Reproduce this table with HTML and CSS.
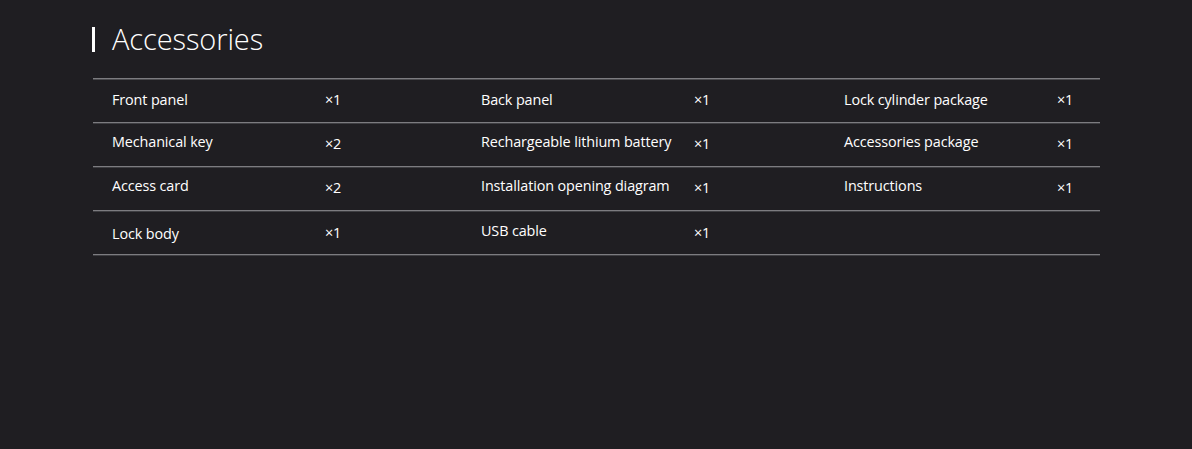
FILE: index.html
```html
<!DOCTYPE html>
<html lang="en">
<head>
<meta charset="utf-8">
<title>Accessories</title>
<link rel="stylesheet" href="styles.css">
</head>
<body>
<section class="acc">
  <h2 class="acc-title"><span class="acc-bar"></span>Accessories</h2>
  <div class="acc-table">
    <div class="acc-row first">
      <span class="name">Front panel</span><span class="qty">×1</span>
      <span class="name">Back panel</span><span class="qty">×1</span>
      <span class="name">Lock cylinder package</span><span class="qty">×1</span>
    </div>
    <div class="acc-row">
      <span class="name">Mechanical key</span><span class="qty low">×2</span>
      <span class="name">Rechargeable lithium battery</span><span class="qty low">×1</span>
      <span class="name">Accessories package</span><span class="qty low">×1</span>
    </div>
    <div class="acc-row">
      <span class="name">Access card</span><span class="qty low">×2</span>
      <span class="name">Installation opening diagram</span><span class="qty low">×1</span>
      <span class="name">Instructions</span><span class="qty low">×1</span>
    </div>
    <div class="acc-row last">
      <span class="name low">Lock body</span><span class="qty low">×1</span>
      <span class="name">USB cable</span><span class="qty low">×1</span>
      <span class="name"></span><span class="qty"></span>
    </div>
  </div>
</section>
</body>
</html>
```

FILE: styles.css
```css
html, body {
  margin: 0;
  padding: 0;
  background: #1f1e22;
  height: 100%;
}
body {
  font-family: "Open Sans", "Liberation Sans", sans-serif;
  color: #ffffff;
}
.acc {
  padding: 20px 0 0 93px;
  width: 1007px;
}
.acc-title {
  margin: 0;
  display: flex;
  align-items: center;
  font-weight: 300;
  font-size: 29px;
  line-height: 38px;
  height: 38px;
  letter-spacing: -0.1px;
}
.acc-bar {
  width: 3px;
  height: 25px;
  background: #ffffff;
  margin-right: 17px;
  margin-left: -1px;
}
.acc-table {
  margin-top: 20px;
  border-top: 1px solid #7c7c80;
  box-shadow: inset 0 1px 0 #4a4a4e;
}
.acc-row {
  display: grid;
  grid-template-columns: 213px 156px 213px 150px 213px 1fr;
  padding-left: 19px;
  height: 43px;
  align-items: center;
  border-bottom: 1px solid #7c7c80;
  box-shadow: 0 1px 0 #3e3e42;
  font-size: 14.4px;
  letter-spacing: -0.12px;
}
.acc-row span {
  white-space: nowrap;
  position: relative;
  top: -3px;
}
.acc-row span.low {
  top: -1px;
}
.acc-row.first span {
  top: -1px;
}
.acc-row.last span {
  top: -2px;
}
.acc-row.last span.low {
  top: 0;
}
.acc-row.last span.name.low {
  top: 1px;
}
```
